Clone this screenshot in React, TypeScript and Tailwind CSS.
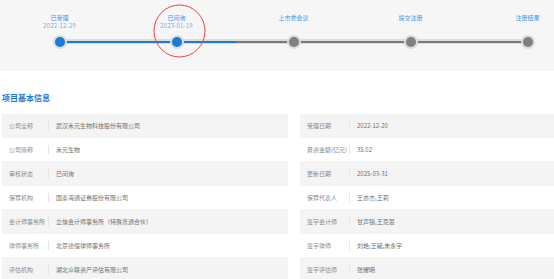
import React from "react";

const steps = [
  { label: "已受理", date: "2022-12-29", done: true },
  { label: "已问询", date: "2023-01-19", done: true },
  { label: "上市委会议", date: "", done: false },
  { label: "提交注册", date: "", done: false },
  { label: "注册结果", date: "", done: false },
];

const left = [
  ["公司全称", "武汉禾元生物科技股份有限公司"],
  ["公司简称", "禾元生物"],
  ["审核状态", "已问询"],
  ["保荐机构", "国泰海通证券股份有限公司"],
  ["会计师事务所", "立信会计师事务所（特殊普通合伙）"],
  ["律师事务所", "北京德恒律师事务所"],
  ["评估机构", "湖北众联资产评估有限公司"],
];

const right = [
  ["受理日期", "2022-12-20"],
  ["募资金额(亿元)", "35.02"],
  ["更新日期", "2025-03-31"],
  ["保荐代表人", "王亦杰,王莉"],
  ["签字会计师", "甘声锦,王克思"],
  ["签字律师", "刘艳,王毓,朱永宇"],
  ["签字评估师", "张耀明"],
];

function Table({ rows, labelW }: { rows: string[][]; labelW: string }) {
  return (
    <div className="flex flex-col">
      {rows.map(([k, v], i) => (
        <div
          key={k}
          className={`flex h-[24px] items-center border-b border-[#f3f3f3] ${i % 2 === 0 ? "bg-[#f4f4f4]" : "bg-white"}`}
        >
          <div className={`${labelW} shrink-0 pl-[7px] text-[6px] leading-[8px] text-[#8a8a8a] whitespace-nowrap`}>{k}</div>
          <div className="h-[9px] w-px bg-[#e4e4e4]" />
          <div className="pl-[7px] text-[6px] leading-[8px] text-[#707070] whitespace-nowrap">{v}</div>
        </div>
      ))}
    </div>
  );
}

export default function App() {
  return (
    <div
      className="w-[554px] h-[279px] overflow-hidden bg-white"
      style={{ fontFamily: '"Noto Sans CJK SC", "Noto Sans", sans-serif' }}
    >
      <div className="relative h-[71px] bg-[#f6f6f6] overflow-hidden">
        <div className="absolute left-[60px] top-[39px] h-[5px] w-[467px] rounded-full bg-[#dcdcdc]">
          <div className="absolute left-0 top-[1.5px] h-[2px] w-[176px] bg-[#1a7bd8]" />
          <div className="absolute left-[176px] top-[1.5px] h-[2px] w-[291px] bg-[#7a7a7a]" />
        </div>
        <div className="relative flex pl-[1px]">
          {steps.map((s) => (
            <div key={s.label} className="flex w-[117px] shrink-0 flex-col items-center pt-[14px]">
              <div className="h-[8px] text-[6px] leading-[8px] text-[#3d97e6] whitespace-nowrap">{s.label}</div>
              <div className="h-[8px] text-[6px] leading-[8px] text-[#6fb0ea] whitespace-nowrap tracking-[0.2px]">{s.date}</div>
              <div className="mt-[5px] flex h-[14px] w-[14px] items-center justify-center rounded-full bg-[#dcdcdc]">
                <div className={`h-[10px] w-[10px] rounded-full ${s.done ? "bg-[#1a7bd8]" : "bg-[#808080]"}`} />
              </div>
            </div>
          ))}
        </div>
        <svg className="absolute left-0 top-0" width="554" height="71">
          <ellipse cx="179.5" cy="31" rx="25.5" ry="26" fill="none" stroke="#e8463c" strokeWidth="1" />
        </svg>
      </div>
      <div className="pl-[2px] pt-[22px] h-[43px]">
        <div className="text-[8px] leading-[10px] font-bold text-[#1d78d6]">项目基本信息</div>
      </div>
      <div className="flex pl-[2px]">
        <div className="w-[286px]">
          <Table rows={left} labelW="w-[46px]" />
        </div>
        <div className="ml-[12px] flex-1">
          <Table rows={right} labelW="w-[49px]" />
        </div>
      </div>
    </div>
  );
}
